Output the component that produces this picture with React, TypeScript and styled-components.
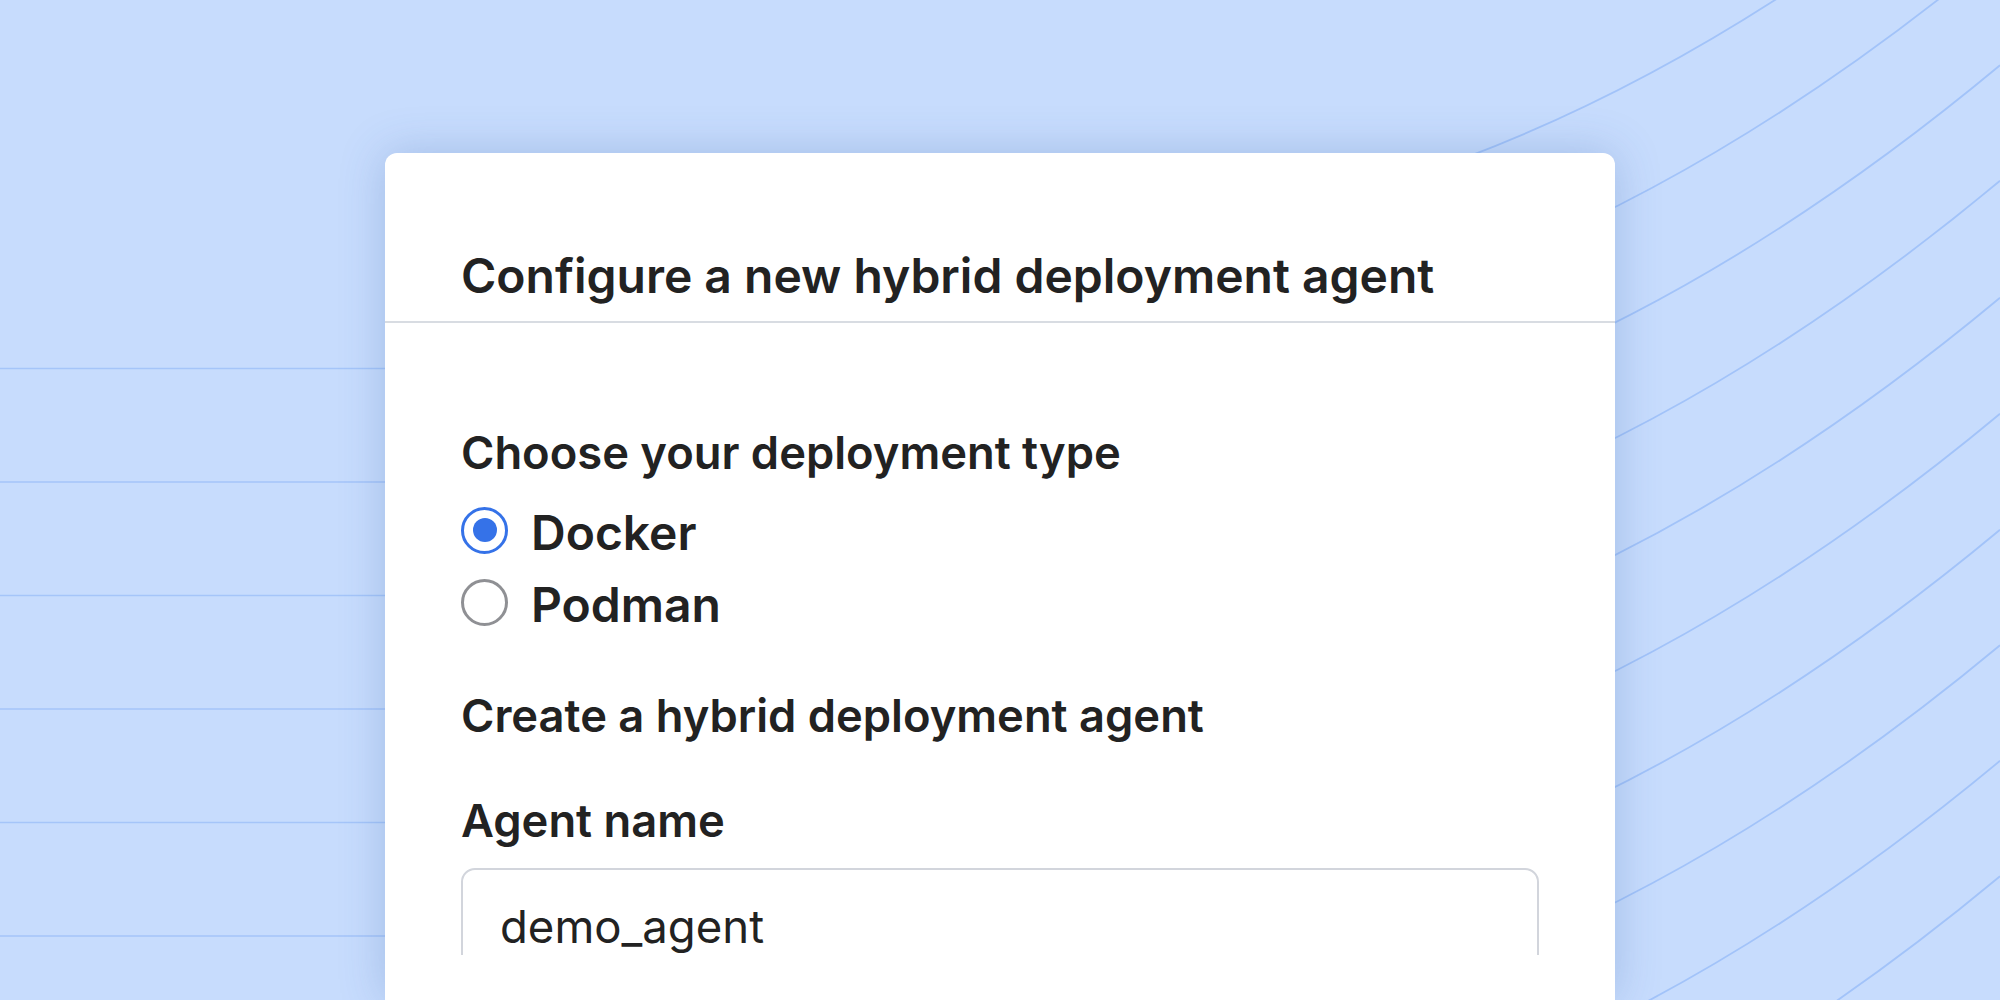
import React from 'react'
import styled, { createGlobalStyle } from 'styled-components'

const GlobalStyle = createGlobalStyle`
  html, body {
    margin: 0;
    padding: 0;
  }
  body {
    font-family: Inter, "Noto Sans", sans-serif;
    background: #c7dcfd;
    color: #222;
  }
`

const Page = styled.div`
  position: relative;
  width: 2000px;
  height: 1000px;
  overflow: hidden;
  background: #c7dcfd;
`

// decorative line pattern behind the card
const Backdrop = styled.svg`
  position: absolute;
  top: 0;
  left: 0;
  width: 2000px;
  height: 1000px;
`

const Card = styled.section`
  position: relative;
  width: 1230px;
  height: 847px;
  margin: 153px auto 0;
  background: #fff;
  border-radius: 12px 12px 0 0;
  box-shadow: 0 0 45px rgba(55, 95, 165, 0.26);
  display: flex;
  flex-direction: column;
  overflow: hidden;
`

const Header = styled.header`
  padding: 99px 76px 21px;
  border-bottom: 2px solid #d8dce2;
`

const Title = styled.h1`
  margin: 0;
  font-size: 48px;
  font-weight: 600;
  line-height: 48px;
  color: #222;
`

const Body = styled.div`
  flex: 1;
  min-height: 0;
  overflow: hidden;
  padding: 107px 76px 0;
  display: flex;
  flex-direction: column;
`

const SectionLabel = styled.div<{ $gap?: number }>`
  margin-top: ${p => p.$gap ?? 0}px;
  font-size: 45.3px;
  font-weight: 600;
  line-height: 46px;
  color: #222;
  white-space: nowrap;
`

const RadioGroup = styled.div`
  margin-top: 33px;
  display: flex;
  flex-direction: column;
  gap: 24px;
`

const RadioRow = styled.label`
  display: flex;
  align-items: center;
  gap: 23px;
  height: 48px;
`

const RadioDot = styled.span<{ $checked?: boolean }>`
  position: relative;
  box-sizing: border-box;
  width: 47px;
  height: 47px;
  margin-top: -6px;
  border-radius: 50%;
  border: 3px solid ${p => (p.$checked ? '#3572e8' : '#8f9094')};
  background: #fff;
  flex-shrink: 0;

  &::after {
    content: '';
    display: ${p => (p.$checked ? 'block' : 'none')};
    position: absolute;
    top: 50%;
    left: 50%;
    width: 24px;
    height: 24px;
    margin: -12px 0 0 -12px;
    border-radius: 50%;
    background: #3572e8;
  }
`

const RadioText = styled.span`
  font-size: 48px;
  font-weight: 600;
  line-height: 48px;
  color: #222;
`

const TextInput = styled.div`
  margin-top: 24px;
  flex-shrink: 0;
  height: 140px;
  box-sizing: border-box;
  padding: 34px 37px 0;
  border: 2.5px solid #d2d5dc;
  border-radius: 14px;
  background: #fff;
  font-size: 45.5px;
  font-weight: 400;
  line-height: 46px;
  color: #222;
`

// the form is cut off here, the card carries on blank to the bottom edge
const BottomFade = styled.div`
  height: 45px;
  flex-shrink: 0;
  background: #fff;
`

const arcOffsets = [85.5, 201, 316.5, 432, 549, 665, 781, 896.5, 1012, 1127.5]
const rowLines = [368.5, 482, 595.5, 709, 822.5, 936]

const options = [
    { name: 'Docker', checked: true },
    { name: 'Podman', checked: false },
]

export default function App() {
    return (
        <>
            <GlobalStyle />
            <Page>
                <Backdrop viewBox="0 0 2000 1000">
                    {rowLines.map(y => (
                        <line key={y} x1={0} y1={y} x2={700} y2={y} stroke="#a5c5f9" strokeWidth={1.6} />
                    ))}
                    {arcOffsets.map(c => (
                        <path
                            key={c}
                            d={`M1400 ${c + 95} Q1700 ${c - 1.6} 2000 ${c - 251.2}`}
                            fill="none"
                            stroke="#a2c3f9"
                            strokeWidth={1.8}
                        />
                    ))}
                </Backdrop>
                <Card>
                    <Header>
                        <Title>Configure a new hybrid deployment agent</Title>
                    </Header>
                    <Body>
                        <SectionLabel>Choose your deployment type</SectionLabel>
                        <RadioGroup>
                            {options.map(o => (
                                <RadioRow key={o.name}>
                                    <RadioDot $checked={o.checked} />
                                    <RadioText>{o.name}</RadioText>
                                </RadioRow>
                            ))}
                        </RadioGroup>
                        <SectionLabel $gap={64}>Create a hybrid deployment agent</SectionLabel>
                        <SectionLabel $gap={59}>Agent name</SectionLabel>
                        <TextInput>demo_agent</TextInput>
                    </Body>
                    <BottomFade />
                </Card>
            </Page>
        </>
    )
}
